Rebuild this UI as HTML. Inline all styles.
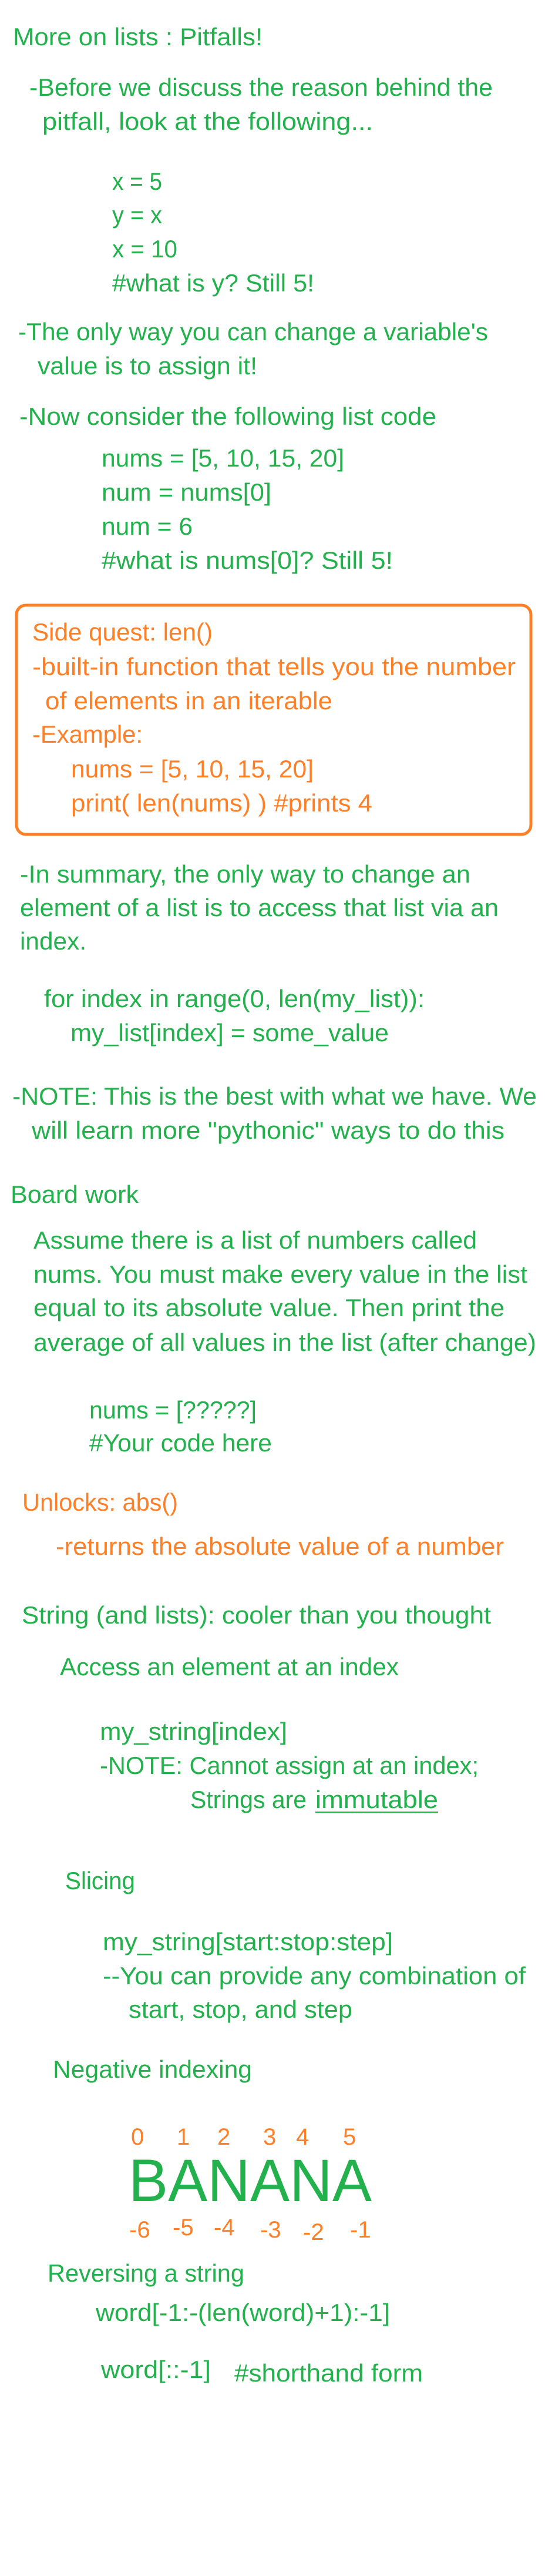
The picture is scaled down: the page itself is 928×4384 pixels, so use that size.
<!DOCTYPE html>
<html><head><meta charset="utf-8"><style>
html,body{margin:0;padding:0;background:#fff;width:928px;height:4384px;overflow:hidden}
svg{display:block}
text{font-family:"Liberation Sans",sans-serif;font-size:42px}
.g{fill:#22b14c}.o{fill:#ff7f27}
</style></head><body>
<svg width="928" height="4384" viewBox="0 0 928 4384" xmlns="http://www.w3.org/2000/svg">
<rect width="928" height="4384" fill="#fff"/>
<g class="g">
<text x="22" y="77" textLength="425" lengthAdjust="spacingAndGlyphs">More on lists : Pitfalls!</text>
<text x="50" y="163" textLength="789" lengthAdjust="spacingAndGlyphs">-Before we discuss the reason behind the</text>
<text x="72" y="221" textLength="563" lengthAdjust="spacingAndGlyphs">pitfall, look at the following...</text>
<text x="191" y="323" textLength="85" lengthAdjust="spacingAndGlyphs">x = 5</text>
<text x="191" y="380" textLength="85" lengthAdjust="spacingAndGlyphs">y = x</text>
<text x="191" y="438" textLength="111" lengthAdjust="spacingAndGlyphs">x = 10</text>
<text x="191" y="496" textLength="344" lengthAdjust="spacingAndGlyphs">#what is y? Still 5!</text>
<text x="31" y="579" textLength="800" lengthAdjust="spacingAndGlyphs">-The only way you can change a variable's</text>
<text x="64" y="637" textLength="374" lengthAdjust="spacingAndGlyphs">value is to assign it!</text>
<text x="33" y="723" textLength="710" lengthAdjust="spacingAndGlyphs">-Now consider the following list code</text>
<text x="173" y="794" textLength="413" lengthAdjust="spacingAndGlyphs">nums = [5, 10, 15, 20]</text>
<text x="173" y="852" textLength="289" lengthAdjust="spacingAndGlyphs">num = nums[0]</text>
<text x="173" y="910" textLength="155" lengthAdjust="spacingAndGlyphs">num = 6</text>
<text x="173" y="968" textLength="496" lengthAdjust="spacingAndGlyphs">#what is nums[0]?  Still 5!</text>
</g>
<rect x="28" y="1030" width="876" height="390" rx="16" ry="16" fill="none" stroke="#ff7f27" stroke-width="5"/>
<g class="o">
<text x="55" y="1090" textLength="307" lengthAdjust="spacingAndGlyphs">Side quest: len()</text>
<text x="55" y="1149" textLength="823" lengthAdjust="spacingAndGlyphs">-built-in function that tells you the number</text>
<text x="77" y="1207" textLength="489" lengthAdjust="spacingAndGlyphs">of elements in an iterable</text>
<text x="55" y="1264" textLength="188" lengthAdjust="spacingAndGlyphs">-Example:</text>
<text x="121" y="1323" textLength="413" lengthAdjust="spacingAndGlyphs">nums = [5, 10, 15, 20]</text>
<text x="121" y="1381" textLength="513" lengthAdjust="spacingAndGlyphs">print( len(nums) ) #prints 4</text>
</g>
<g class="g">
<text x="34" y="1502" textLength="767" lengthAdjust="spacingAndGlyphs">-In summary, the only way to change an</text>
<text x="34" y="1559" textLength="815" lengthAdjust="spacingAndGlyphs">element of a list is to access that list via an</text>
<text x="34" y="1616" textLength="113" lengthAdjust="spacingAndGlyphs">index.</text>
<text x="75" y="1714" textLength="648" lengthAdjust="spacingAndGlyphs">for index in range(0, len(my_list)):</text>
<text x="120" y="1772" textLength="542" lengthAdjust="spacingAndGlyphs">my_list[index] = some_value</text>
<text x="21" y="1880" textLength="893" lengthAdjust="spacingAndGlyphs">-NOTE: This is the best with what we have. We</text>
<text x="54" y="1938" textLength="805" lengthAdjust="spacingAndGlyphs">will learn more "pythonic" ways to do this</text>
<text x="18" y="2047" textLength="218" lengthAdjust="spacingAndGlyphs">Board work</text>
<text x="57" y="2125" textLength="755" lengthAdjust="spacingAndGlyphs">Assume there is a list of numbers called</text>
<text x="57" y="2183" textLength="841" lengthAdjust="spacingAndGlyphs">nums. You must make every value in the list</text>
<text x="57" y="2240" textLength="802" lengthAdjust="spacingAndGlyphs">equal to its absolute value. Then print the</text>
<text x="57" y="2299" textLength="856" lengthAdjust="spacingAndGlyphs">average of all values in the list (after change)</text>
<text x="152" y="2414" textLength="285" lengthAdjust="spacingAndGlyphs">nums = [?????]</text>
<text x="152" y="2470" textLength="311" lengthAdjust="spacingAndGlyphs">#Your code here</text>
</g>
<g class="o">
<text x="38" y="2571" textLength="265" lengthAdjust="spacingAndGlyphs">Unlocks: abs()</text>
<text x="95" y="2646" textLength="763" lengthAdjust="spacingAndGlyphs">-returns the absolute value of a number</text>
</g>
<g class="g">
<text x="37" y="2763" textLength="799" lengthAdjust="spacingAndGlyphs">String (and lists): cooler than you thought</text>
<text x="102" y="2851" textLength="577" lengthAdjust="spacingAndGlyphs">Access an element at an index</text>
<text x="170" y="2961" textLength="319" lengthAdjust="spacingAndGlyphs">my_string[index]</text>
<text x="170" y="3019" textLength="645" lengthAdjust="spacingAndGlyphs">-NOTE: Cannot assign at an index;</text>
<text x="324" y="3077" textLength="198" lengthAdjust="spacingAndGlyphs">Strings are</text>
<text x="537" y="3077" textLength="209" lengthAdjust="spacingAndGlyphs">immutable</text>
<rect x="537" y="3083" width="209" height="2.5"/>
<text x="111" y="3215" textLength="119" lengthAdjust="spacingAndGlyphs">Slicing</text>
<text x="175" y="3319" textLength="494" lengthAdjust="spacingAndGlyphs">my_string[start:stop:step]</text>
<text x="175" y="3377" textLength="720" lengthAdjust="spacingAndGlyphs">--You can provide any combination of</text>
<text x="219" y="3434" textLength="381" lengthAdjust="spacingAndGlyphs">start, stop, and step</text>
<text x="90" y="3536" textLength="339" lengthAdjust="spacingAndGlyphs">Negative indexing</text>
<text x="219" y="3746" style="font-size:102px" textLength="414" lengthAdjust="spacingAndGlyphs">BANANA</text>
<text x="81" y="3883" textLength="335" lengthAdjust="spacingAndGlyphs">Reversing a string</text>
<text x="163" y="3950" textLength="501" lengthAdjust="spacingAndGlyphs">word[-1:-(len(word)+1):-1]</text>
<text x="172" y="4047" textLength="187" lengthAdjust="spacingAndGlyphs">word[::-1]</text>
<text x="399" y="4053" textLength="321" lengthAdjust="spacingAndGlyphs">#shorthand form</text>
</g>
<g class="o">
<text x="223" y="3650" style="font-size:40px">0</text>
<text x="301" y="3650" style="font-size:40px">1</text>
<text x="370" y="3650" style="font-size:40px">2</text>
<text x="448" y="3650" style="font-size:40px">3</text>
<text x="504" y="3650" style="font-size:40px">4</text>
<text x="584" y="3650" style="font-size:40px">5</text>
<text x="220" y="3808" style="font-size:40px">-6</text>
<text x="294" y="3804" style="font-size:40px">-5</text>
<text x="364" y="3804" style="font-size:40px">-4</text>
<text x="443" y="3808" style="font-size:40px">-3</text>
<text x="516" y="3812" style="font-size:40px">-2</text>
<text x="596" y="3808" style="font-size:40px">-1</text>
</g>
</svg>
</body></html>
